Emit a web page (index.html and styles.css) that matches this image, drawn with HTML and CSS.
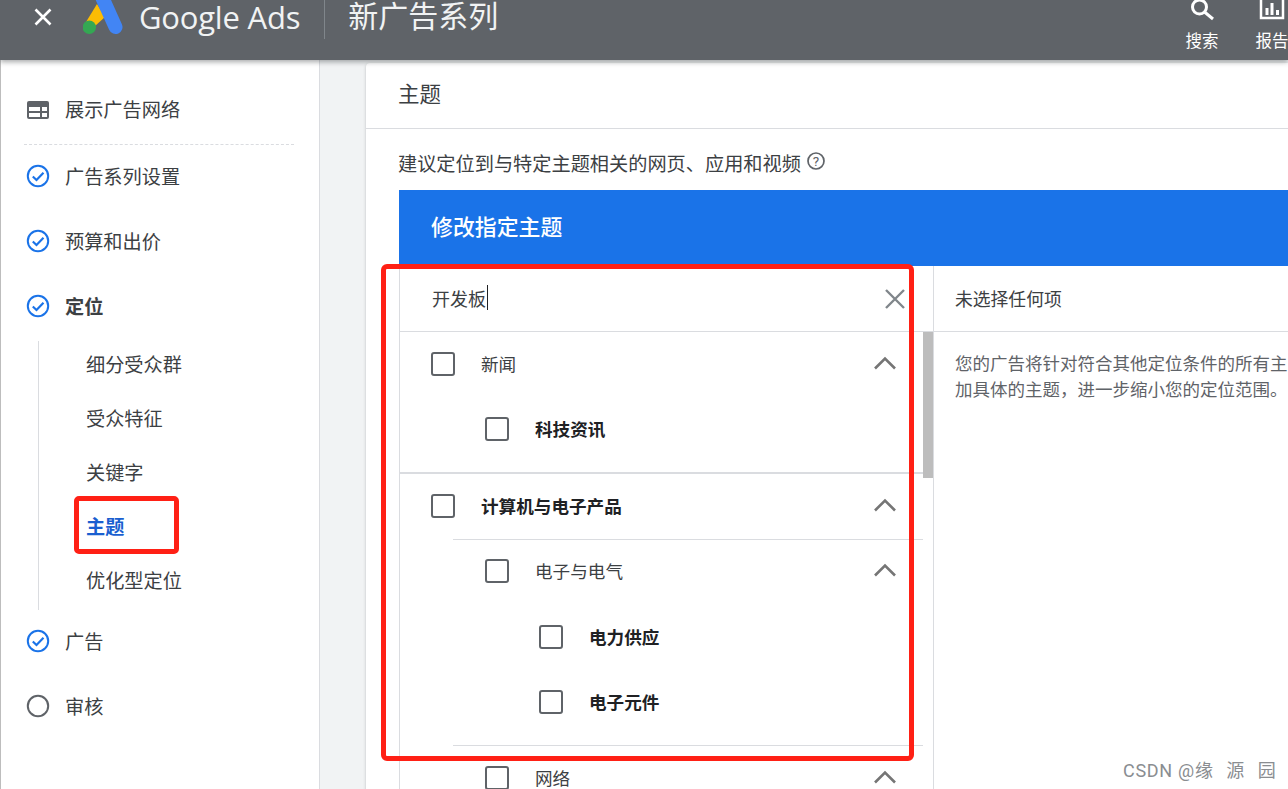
FILE: index.html
```html
<!DOCTYPE html>
<html lang="zh">
<head>
<meta charset="utf-8">
<title>新广告系列</title>
<link rel="stylesheet" href="styles.css">
</head>
<body>
<header class="topbar">
  <svg class="close-icon" viewBox="0 0 20 20" width="20" height="20"><path d="M2.5 2.5 17.5 17.5M17.5 2.5 2.5 17.5" stroke="#fff" stroke-width="2.6" fill="none"/></svg>
  <svg class="logo" viewBox="0 0 40 36" width="40" height="36"><path d="M14 4 22 17 12 26 3 22Z" fill="#fbbc04"/><path d="M19 -3 32.500 27" stroke="#4285f4" stroke-width="14" stroke-linecap="round"/><circle cx="6.300" cy="27.300" r="6.700" fill="#34a853"/></svg>
  <span class="brand">Google Ads</span>
  <span class="bar-divider"></span>
  <span class="bar-title">新广告系列</span>
  <div class="bar-actions">
    <div class="bar-action search-action">
      <svg viewBox="0 0 26 26" width="26" height="26"><circle cx="10.500" cy="7" r="7" fill="none" stroke="#fff" stroke-width="3"/><path d="M15.500 12 24 19" stroke="#fff" stroke-width="3"/></svg>
      <span>搜索</span>
    </div>
    <div class="bar-action report-action">
      <svg viewBox="0 0 26 26" width="26" height="26"><path d="M2 -4H24V18H2Z" fill="none" stroke="#fff" stroke-width="2.500"/><path d="M6.500 8h3v7h-3zM11.500 3h3v12h-3zM17 10h3v5h-3z" fill="#fff"/></svg>
      <span>报告</span>
    </div>
  </div>
</header>
<div class="layout">
  <nav class="sidebar">
    <div class="nav-head">
      <svg class="nav-icon" viewBox="0 0 24 24" width="24" height="24"><rect x="1" y="4" width="22" height="18" rx="2" fill="#5f6368"/><path d="M3 10h18v10H3z" fill="#fff"/><path d="M3 15h18M15 10v10" stroke="#5f6368" stroke-width="2"/></svg>
      <span>展示广告网络</span>
    </div>
    <div class="nav-item first"><svg class="nav-icon" viewBox="0 0 24 24" width="24" height="24"><circle cx="12" cy="12" r="10.200" fill="none" stroke="#1a73e8" stroke-width="2"/><path d="M6.800 12.500 10.500 16 17.500 8.800" fill="none" stroke="#1a73e8" stroke-width="2.200"/></svg><span>广告系列设置</span></div>
    <div class="nav-item"><svg class="nav-icon" viewBox="0 0 24 24" width="24" height="24"><circle cx="12" cy="12" r="10.200" fill="none" stroke="#1a73e8" stroke-width="2"/><path d="M6.800 12.500 10.500 16 17.500 8.800" fill="none" stroke="#1a73e8" stroke-width="2.200"/></svg><span>预算和出价</span></div>
    <div class="nav-item strong"><svg class="nav-icon" viewBox="0 0 24 24" width="24" height="24"><circle cx="12" cy="12" r="10.200" fill="none" stroke="#1a73e8" stroke-width="2"/><path d="M6.800 12.500 10.500 16 17.500 8.800" fill="none" stroke="#1a73e8" stroke-width="2.200"/></svg><span>定位</span></div>
    <div class="subnav">
      <div class="sub-item">细分受众群</div>
      <div class="sub-item">受众特征</div>
      <div class="sub-item">关键字</div>
      <div class="sub-item active">主题<span class="mark mark-nav"></span></div>
      <div class="sub-item">优化型定位</div>
    </div>
    <div class="nav-item after-sub"><svg class="nav-icon" viewBox="0 0 24 24" width="24" height="24"><circle cx="12" cy="12" r="10.200" fill="none" stroke="#1a73e8" stroke-width="2"/><path d="M6.800 12.500 10.500 16 17.500 8.800" fill="none" stroke="#1a73e8" stroke-width="2.200"/></svg><span>广告</span></div>
    <div class="nav-item"><svg class="nav-icon" viewBox="0 0 24 24" width="24" height="24"><circle cx="12" cy="12" r="10.200" fill="none" stroke="#5f6368" stroke-width="2"/></svg><span>审核</span></div>
  </nav>
  <main class="content">
    <section class="card">
      <h2 class="card-title">主题</h2>
      <div class="card-body">
        <p class="hint">建议定位到与特定主题相关的网页、应用和视频<svg class="help" viewBox="0 0 20 20" width="20" height="20"><circle cx="10" cy="10" r="8" fill="none" stroke="#5f6368" stroke-width="1.700"/><text x="10" y="14.500" text-anchor="middle" class="help-mark">?</text></svg></p>
        <div class="banner">修改指定主题</div>
        <div class="picker">
          <div class="picker-left">
            <div class="search-row">
              <span class="search-text">开发板</span><span class="caret"></span>
              <svg class="clear" viewBox="0 0 20 20" width="20" height="20"><path d="M1 1 19 19M19 1 1 19" stroke="#80868b" stroke-width="2.400" fill="none"/></svg>
            </div>
            <div class="tree">
              <span class="scroll-thumb"></span>
              <div class="group group-first">
                <div class="row l0"><span class="box"></span><span class="label">新闻</span><svg class="chev" viewBox="0 0 24 14" width="24" height="14"><path d="M2 12.500 12 2.500 22 12.500" fill="none" stroke="#757575" stroke-width="2.600"/></svg></div>
                <div class="row l1"><span class="box"></span><span class="label bold">科技资讯</span></div>
              </div>
              <div class="group thick">
                <div class="row l0"><span class="box"></span><span class="label bold">计算机与电子产品</span><svg class="chev" viewBox="0 0 24 14" width="24" height="14"><path d="M2 12.500 12 2.500 22 12.500" fill="none" stroke="#757575" stroke-width="2.600"/></svg></div>
                <div class="subgroup tall">
                  <div class="row l1 lead"><span class="box"></span><span class="label">电子与电气</span><svg class="chev" viewBox="0 0 24 14" width="24" height="14"><path d="M2 12.500 12 2.500 22 12.500" fill="none" stroke="#757575" stroke-width="2.600"/></svg></div>
                  <div class="row l2"><span class="box"></span><span class="label bold">电力供应</span></div>
                  <div class="row l2"><span class="box"></span><span class="label bold">电子元件</span></div>
                </div>
                <div class="subgroup">
                  <div class="row l1"><span class="box"></span><span class="label">网络</span><svg class="chev" viewBox="0 0 24 14" width="24" height="14"><path d="M2 12.500 12 2.500 22 12.500" fill="none" stroke="#757575" stroke-width="2.600"/></svg></div>
                </div>
              </div>
            </div>
            <span class="mark mark-picker"></span>
          </div>
          <div class="picker-right">
            <div class="none-selected">未选择任何项</div>
            <p class="explain">您的广告将针对符合其他定位条件的所有主<br>加具体的主题，进一步缩小您的定位范围。</p>
          </div>
        </div>
      </div>
    </section>
  </main>
</div>
<span class="watermark"><span class="wm-latin">CSDN @</span>缘   源   园</span>
</body>
</html>
```

FILE: styles.css
```css
* { box-sizing: border-box; }
html, body { margin: 0; height: 100%; overflow: hidden; }
body {
  position: relative;
  width: 1288px;
  height: 789px;
  background: #f1f3f4;
  color: #3c4043;
  font-family: Roboto, "Noto Sans CJK SC", sans-serif;
  font-size: 19.2px;
  display: flex;
  flex-direction: column;
}
.topbar {
  flex: 0 0 60px;
  height: 60px;
  background: #5f6368;
  color: #fff;
  display: flex;
  align-items: flex-start;
  box-shadow: 0 2px 5px rgba(60,64,67,.45);
  position: relative;
  z-index: 2;
}
.close-icon { margin: 7px 0 0 33px; }
.logo { margin: 0 0 0 30px; }
.brand {
  flex: none;
  margin-left: 16px;
  font-family: "Open Sans", Roboto, sans-serif;
  font-size: 31px;
  line-height: 34px;
  letter-spacing: -.2px;
  color: #f1f3f4;
  white-space: nowrap;
}
.bar-divider { width: 1px; height: 39px; background: #80868b; margin-left: 24px; }
.bar-title { margin-left: 23px; font-size: 30px; line-height: 34px; color: #f1f3f4; }
.bar-actions { margin-left: auto; display: flex; }
.bar-action {
  display: flex;
  flex-direction: column;
  align-items: center;
  font-size: 16.500px;
  line-height: 20px;
  height: 60px;
}
.bar-action svg { display: block; height: 26px; margin-bottom: 6px; }
.search-action { width: 34px; margin-right: 37px; }
.report-action { width: 32px; white-space: nowrap; }
.layout { flex: 1; display: flex; min-height: 0; }
.sidebar {
  flex: 0 0 320px;
  background: #fff;
  border-right: 1px solid #dadce0;
  border-left: 1px solid #bdbdbd;
  padding: 27px 25px 0 23px;
}
.nav-head {
  display: flex;
  align-items: center;
  height: 58px;
  padding-bottom: 13px;
  border-bottom: 1px dashed #dadce0;
}
.nav-icon { flex: none; margin-right: 15px; margin-left: 2px; }
.nav-item { display: flex; align-items: center; height: 65px; }
.nav-item.first { margin-top: -2px; }
.nav-item.strong { font-weight: 700; }
.subnav {
  display: flex;
  flex-direction: column;
  margin-left: 14px;
  border-left: 1px solid #dadce0;
  padding: 0 0 0 47px;
  margin-top: 3px;
  height: 269px;
}
.sub-item { flex: none; height: 54px; display: flex; align-items: center; position: relative; white-space: nowrap; }
.sub-item:first-child { margin-top: -4px; }
.sub-item.active { color: #1a5fd0; font-weight: 700; }
.mark { position: absolute; border: 5px solid #ff2015; border-radius: 5px; pointer-events: none; }
.mark-nav { left: -12px; top: -3px; width: 105px; height: 58px; }
.after-sub { margin-top: -2px; }
.content { flex: 1; min-width: 0; padding: 3px 0 0 46px; overflow: hidden; }
.card {
  background: #fff;
  border-radius: 4px 0 0 0;
  box-shadow: 0 1px 3px rgba(60,64,67,.3);
  height: 730px;
}
.card-title {
  margin: 0;
  height: 66px;
  padding: 0 0 6px 32px;
  display: flex;
  align-items: center;
  font-size: 21.500px;
  font-weight: 400;
  border-bottom: 1px solid #dadce0;
}
.card-body { padding: 0 0 0 33px; }
.hint { margin: 0 0 0 -1px; height: 61px; padding-top: 7px; display: flex; align-items: center; }
.help { margin-left: 5px; margin-top: -4px; }
.help-mark { font-size: 13.500px; fill: #5f6368; font-family: Roboto, sans-serif; }
.banner {
  height: 76px;
  padding: 0 0 6px 32px;
  background: #1a73e8;
  color: #fff;
  font-size: 21.900px;
  font-weight: 500;
  display: flex;
  align-items: center;
}
.picker { display: flex; height: 524px; }
.picker-left {
  flex: 0 0 535px;
  border-left: 1px solid #dadce0;
  border-right: 1px solid #dadce0;
  position: relative;
}
.search-row {
  height: 66px;
  border-bottom: 1px solid #dadce0;
  padding: 0 0 2px 32px;
  display: flex;
  align-items: center;
  position: relative;
  font-size: 18px;
}
.caret { width: 1px; height: 25px; background: #202124; margin-left: 1px; }
.clear { position: absolute; right: 28px; top: 23px; }
.tree { position: relative; }
.scroll-thumb { position: absolute; right: 0; top: 0; width: 10px; height: 146px; background: #bdbdbd; z-index: 1; }
.group-first { height: 140px; }
.group.thick { border-top: 2px solid #dadce0; }
.row { display: flex; align-items: center; height: 65px; padding-bottom: 3px; font-size: 17.600px; }
.l0 { padding-left: 31px; padding-right: 36px; }
.l1 { padding-left: 85px; padding-right: 36px; }
.l2 { padding-left: 139px; padding-right: 36px; }
.box { flex: none; width: 24px; height: 24px; margin-top: 2px; border: 2.500px solid #5f6368; border-radius: 3px; margin-right: 26px; }
.label { color: #3c4043; }
.label.bold { font-weight: 700; color: #202124; }
.chev { margin-left: auto; }
.subgroup { border-top: 1px solid #dadce0; margin: 0 10px 0 53px; }
.subgroup .row { margin: 0 -10px 0 -53px; }
.subgroup.tall { height: 206px; }
.subgroup .row.lead { height: 63px; padding-bottom: 3px; margin-bottom: 2px; }
.mark-picker { left: -19px; top: -2px; width: 533px; height: 497px; border-radius: 6px; z-index: 3; }
.picker-right { flex: 1; min-width: 0; white-space: nowrap; overflow: hidden; }
.none-selected { height: 66px; border-bottom: 1px solid #dadce0; padding: 0 0 2px 21px; display: flex; align-items: center; font-size: 17.800px; }
.explain { margin: 19px 0 0 21px; font-size: 17.500px; line-height: 26px; color: #5f6368; }
.watermark {
  position: absolute;
  left: 1123px;
  top: 760px;
  font-size: 18px;
  line-height: 22px;
  color: #8a8d91;
  white-space: pre;
  z-index: 4;
}
.wm-latin { letter-spacing: .7px; }
```
